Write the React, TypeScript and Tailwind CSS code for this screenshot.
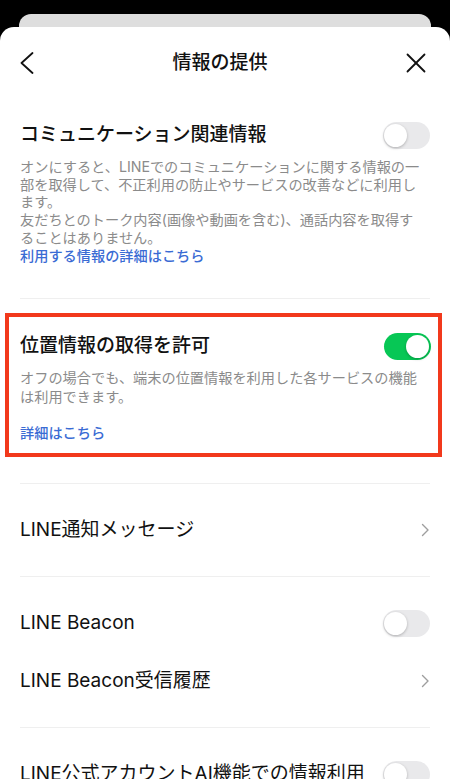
import React from 'react';

const FONT = "font-['Inter','Noto_Sans_CJK_JP',sans-serif]";

type ToggleProps = { on?: boolean };

const Toggle: React.FC<ToggleProps> = ({ on = false }) => (
  <div
    className={`relative w-[47px] h-[27px] shrink-0 rounded-full ${on ? 'bg-[#07c755]' : 'bg-[#e9e9eb]'}`}
  >
    <div
      className={`absolute top-[2px] w-[23px] h-[23px] rounded-full bg-white shadow-[0_1px_3px_rgba(0,0,0,0.25)] ${on ? 'right-[2px]' : 'left-[1px]'}`}
    />
  </div>
);

const ChevronRight = () => (
  <svg width="9" height="14" viewBox="0 0 9 14" className="shrink-0">
    <polyline points="1.5,1.5 7,7 1.5,12.5" fill="none" stroke="#9e9e9e" strokeWidth="1.4" strokeLinecap="round" strokeLinejoin="round" />
  </svg>
);

const Divider = () => <div className="mx-5 h-px bg-[#efefef]" />;

const Line: React.FC<{ children: React.ReactNode }> = ({ children }) => (
  <span className="block whitespace-nowrap">{children}</span>
);

const App: React.FC = () => {
  return (
    <div className={`${FONT} w-[450px] h-[779px] overflow-hidden bg-black flex flex-col`}>
      {/* stacked sheet behind */}
      <div className="shrink-0 mt-[14px] mx-[19px] h-[13px] rounded-t-[12px] bg-[#dedede]" />

      <div className="shrink-0 bg-white rounded-t-[14px] text-[#111111]">
        {/* header */}
        <div className="h-[70px] px-5 pt-[2px] flex items-center justify-between">
          <svg width="14" height="22" viewBox="0 0 14 22">
            <polyline points="12.5,1 1.5,11 12.5,21" fill="none" stroke="#111" strokeWidth="1.8" strokeLinecap="round" strokeLinejoin="round" />
          </svg>
          <h1 className="text-[19px] font-medium">情報の提供</h1>
          <svg width="20" height="20" viewBox="0 0 20 20" className="mr-[4px]">
            <line x1="1.5" y1="1.5" x2="18.5" y2="18.5" stroke="#111" strokeWidth="1.8" strokeLinecap="round" />
            <line x1="18.5" y1="1.5" x2="1.5" y2="18.5" stroke="#111" strokeWidth="1.8" strokeLinecap="round" />
          </svg>
        </div>

        {/* communication */}
        <section className="px-5 pt-[24px] pb-[34px]">
          <div className="flex items-center justify-between h-[28px]">
            <h2 className="text-[19px] font-medium">コミュニケーション関連情報</h2>
            <Toggle />
          </div>
          <div className="mt-[9px] text-[14.2px] leading-[17.7px] text-[#8b8b8b]">
            <Line>オンにすると、LINEでのコミュニケーションに関する情報の一</Line>
            <Line>部を取得して、不正利用の防止やサービスの改善などに利用し</Line>
            <Line>ます。</Line>
            <Line>友だちとのトーク内容(画像や動画を含む)、通話内容を取得す</Line>
            <Line>ることはありません。</Line>
            <a className="block font-medium text-[#3a6bd4]">利用する情報の詳細はこちら</a>
          </div>
        </section>

        <Divider />

        {/* highlighted location section */}
        <div className="mt-[14px] ml-[5px] mr-[8px] border-[4px] border-[#f2391c] pl-[11px] pr-[7px] pt-[16px] pb-[11px]">
          <div className="flex items-center justify-between h-[27px]">
            <h2 className="text-[19px] font-medium">位置情報の取得を許可</h2>
            <Toggle on />
          </div>
          <div className="mt-[9px] text-[14.2px] leading-[18.5px] text-[#8b8b8b]">
            <Line>オフの場合でも、端末の位置情報を利用した各サービスの機能</Line>
            <Line>は利用できます。</Line>
          </div>
          <a className="block mt-[18px] text-[14.2px] leading-[18px] font-medium text-[#3a6bd4]">詳細はこちら</a>
        </div>

        <div className="h-[26px]" />
        <Divider />

        <div className="h-[92px] px-5 flex items-center justify-between">
          <span className="text-[19px]">LINE通知メッセージ</span>
          <ChevronRight />
        </div>

        <Divider />

        <div className="px-5 pt-[17px] pb-[17px]">
          <div className="h-[58px] flex items-center justify-between">
            <span className="text-[19px]">LINE Beacon</span>
            <Toggle />
          </div>
          <div className="h-[58px] flex items-center justify-between">
            <span className="text-[19px]">LINE Beacon受信履歴</span>
            <ChevronRight />
          </div>
        </div>

        <Divider />

        <div className="px-5 pt-[17px]">
          <div className="h-[58px] flex items-center justify-between">
            <span className="text-[19px]">LINE公式アカウントAI機能での情報利用</span>
            <Toggle />
          </div>
        </div>
      </div>
    </div>
  );
};

export default App;
